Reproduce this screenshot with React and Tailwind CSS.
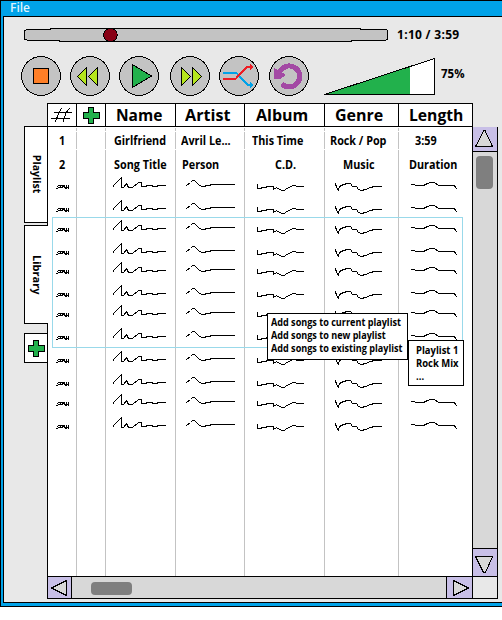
import React from "react";

const rowHeights = [
  "h-[23px]", "h-[20px]", "h-[23px]", "h-[19px]", "h-[23px]", "h-[20px]",
  "h-[23px]", "h-[23px]", "h-[23px]", "h-[20px]", "h-[23px]", "h-[162px]",
];

const columns = [
  { x: 48, w: 28, cls: "w-[29px] border-r", d: "M56 188.5H58M58 187.5H60M57 186.5H58M58 185.5H65M60.5 185V188M61 187.5H62M62.5 186V188M63 186.5H65M64 187.5H66M65 188.5H67M66.5 185V188M67 187.5H68M68.5 185V189" },
  { x: 77, w: 28, cls: "w-[29px] border-r", d: "" },
  { x: 106, w: 69, cls: "w-[70px] border-r", d: "M113.5 187V185.5L116.5 182.5L121.5 177.5V187.5H123.5L126.5 183.5L128.5 187.5H132.5L138.5 182.5H141.5V186.5H146.5L147 185.5H152L152.5 186.5H157L157.5 185.5H166" },
  { x: 176, w: 68, cls: "w-[69px] border-r", d: "M186.5 185.5L190.5 182.5L192.5 180.5H194.5L198.5 184.5L201.5 186.5H205.5L206 185.5H210L210.5 184.5H235" },
  { x: 245, w: 79, cls: "w-[80px] border-r", d: "M257.5 184V188.5H261.5L262 187.5H266L266.5 186.5H273.5V189.5L276.5 187.5L281.5 190.5H284.5L286.5 188.5L293.5 185.5L298.5 186.5H304" },
  { x: 325, w: 73, cls: "w-[74px] border-r", d: "M335.5 183.5L336.5 187.5L338.5 190.5L339.5 186.5L343.5 184.5L347.5 183.5H350.5L352.5 186.5H356.5L358.5 189.5L361.5 190.5L365.5 189.5L370.5 187.5L374.5 186.5H382" },
  { x: 399, w: 73, cls: "w-[73px]", d: "M411 184.5H414.5L415.5 185.5H423.5L427.5 183.5L430 182.5H434.5L438.5 185.5H454.5L455.5 187.5L457 188.5" },
];

const headings = [
  { text: "Name", cls: "w-[70px] pl-[10px]", scale: "scale-x-[0.97]" },
  { text: "Artist", cls: "w-[69px] pl-[9px]", scale: "scale-x-[1.01]" },
  { text: "Album", cls: "w-[80px] pl-[11px]", scale: "scale-x-100" },
  { text: "Genre", cls: "w-[74px] pl-[10px]", scale: "scale-x-100" },
  { text: "Length", cls: "w-[74px] pl-[10px]", scale: "scale-x-[0.98]" },
];

const songs = [
  {
    row: "h-[19px] py-px",
    cell: "",
    values: [
      ["1", "pl-[11px]"], ["", ""], ["Girlfriend", "pl-[8px]"], ["Avril Le...", "pl-[5px]"],
      ["This Time", "pl-[7px]"], ["Rock / Pop", "pl-[5px]"], ["3:59", "pl-[16px]"],
    ],
  },
  {
    row: "h-[24px]",
    cell: "pt-[6px]",
    values: [
      ["2", "pl-[11px]"], ["", ""], ["Song Title", "pl-[8px]"], ["Person", "pl-[6px]"],
      ["C.D.", "pl-[30px]"], ["Music", "pl-[18px]"], ["Duration", "pl-[10px]"],
    ],
  },
];

function Plus() {
  return (
    <svg width="17" height="17" viewBox="0 0 17 17" shapeRendering="crispEdges" className="shrink-0">
      <path d="M5.5 .5H10.5V5.5H16.5V11.5H10.5V16.5H5.5V11.5H.5V5.5H5.5Z" fill="#22b14c" stroke="#000" />
    </svg>
  );
}

function Round({ children, x, className }) {
  return (
    <svg width="40" height="40" viewBox={`${x - 20.5} 56 40 40`} shapeRendering="crispEdges" className={`shrink-0 ${className || ""}`}>
      <circle cx={x - 0.5} cy="76" r="19.4" fill="#c3c3c3" stroke="#000" />
      {children}
    </svg>
  );
}

function Controls() {
  return (
    <div className="flex pl-[17px] pt-[7px]">
      <Round x={41.5}>
        <rect x="33.5" y="68.5" width="15" height="15" fill="#ff7f27" stroke="#000" />
      </Round>
      <Round x={90.5} className="ml-[9px]">
        <path d="M77.5 76.5L86.5 67.5V85.5ZM88.5 76.5L97.5 67.5V85.5Z" fill="#b5e61d" stroke="#000" />
      </Round>
      <Round x={139.5} className="ml-[9px]">
        <path d="M132.5 64.5V87.5L151.5 76Z" fill="#22b14c" stroke="#000" />
      </Round>
      <Round x={190.5} className="ml-[11px]">
        <path d="M181.5 67.5V85.5L190.5 76.5ZM192.5 67.5V85.5L201.5 76.5Z" fill="#b5e61d" stroke="#000" />
      </Round>
      <Round x={239.5} className="ml-[9px]">
        <path d="M223 73H236.5L248 85H251" fill="none" stroke="#00a2e8" strokeWidth="2" />
        <path d="M250 82L253.5 85L250 88Z" fill="#00a2e8" />
        <path d="M223 79H235.5L247 67H250" fill="none" stroke="#ed1c24" strokeWidth="2" />
        <path d="M250 64L253.5 67L250 70Z" fill="#ed1c24" />
      </Round>
      <Round x={289.5} className="ml-[10px]">
        <path d="M282 84A10.5 10.5 0 1 0 280 71.5" fill="none" stroke="#a349a4" strokeWidth="5" />
        <path d="M274 68V79H280L284.5 76V74Z" fill="#a349a4" />
      </Round>
      <svg width="112" height="40" viewBox="324 56 112 40" shapeRendering="crispEdges" className="ml-[15px] shrink-0">
        <path d="M324.5 94.5L434.5 58.5V94.5Z" fill="#fff" />
        <path d="M324.5 94.5L410 66.5V94.5Z" fill="#22b14c" />
        <path d="M324.5 94.5L434.5 58.5V94.5Z" fill="none" stroke="#000" />
      </svg>
      <span className="ml-[5px] mt-[10px] origin-left text-[11.5px] leading-4">75%</span>
    </div>
  );
}

function Seek() {
  return (
    <div className="flex h-[32px] pl-[20px] pt-[10px]">
      <svg width="365" height="16" viewBox="24 27 365 16" shapeRendering="crispEdges" className="shrink-0">
        <path d="M24.5 30.5L28 29.5H50V28.5H360V29.5H386L387.5 30.5V39.5L384 40.5H351V41.5H59V40.5H30L24.5 39.5Z" fill="#c3c3c3" stroke="#000" />
        <circle cx="110.5" cy="35" r="6.8" fill="#880015" stroke="#000" />
      </svg>
      <span className="ml-[8px] origin-left whitespace-nowrap text-[12px] leading-4 tracking-[0.3px]">1:10 / 3:59</span>
    </div>
  );
}

function Sidebar() {
  return (
    <div className="flex w-[44px] shrink-0 flex-col pl-[20px]">
      <div className="h-[23px] border-r border-black" />
      <div className="flex h-[97px] items-center justify-center border border-black bg-white pl-[2px]">
        <span className="scale-y-[0.96] text-[11px] leading-4 [writing-mode:vertical-rl]">Playlist</span>
      </div>
      <div className="h-[2px] border-r border-black" />
      <div className="flex h-[99px] items-center justify-center border border-r-0 border-black bg-white pl-px">
        <span className="text-[11px] leading-4 [writing-mode:vertical-rl]">Library</span>
      </div>
      <div className="h-[9px] border-r border-black" />
      <div className="flex h-[30px] items-center justify-center border border-black bg-white pl-px">
        <Plus />
      </div>
      <div className="grow border-r border-black" />
    </div>
  );
}

function Table() {
  return (
    <div className="flex h-[449px] w-[424px] shrink-0 flex-col overflow-hidden bg-white">
      <div className="flex h-[4px] pt-px">
        {columns.map((c) => (
          <div key={c.x} className={`shrink-0 border-[#c3c3c3] ${c.cls}`} />
        ))}
      </div>
      {songs.map((s, i) => (
        <div key={i} className={`flex ${s.row}`}>
          {columns.map((c, j) => (
            <div key={c.x} className={`shrink-0 border-[#c3c3c3] ${c.cls} ${s.cell} ${s.values[j][1]}`}>
              <span className="inline-block origin-left scale-x-[0.9] whitespace-nowrap align-top text-[12px] leading-[17px]">
                {s.values[j][0]}
              </span>
            </div>
          ))}
        </div>
      ))}
      {rowHeights.map((h, i) => (
        <div key={i} className={`flex shrink-0 ${h}`}>
          {columns.map((c) => (
            <div key={c.x} className={`shrink-0 border-[#c3c3c3] ${c.cls}`}>
              {c.d && (
                <svg width={c.w} height="19" viewBox={`${c.x} 174 ${c.w} 19`} shapeRendering="crispEdges" className="block overflow-visible">
                  <path d={c.d} fill="none" stroke="#000" />
                </svg>
              )}
            </div>
          ))}
        </div>
      ))}
    </div>
  );
}

function VerticalBar() {
  return (
    <div className="flex w-[26px] shrink-0 flex-col border-x border-black bg-[#d8d8d8]">
      <div className="h-[25px] border-b border-black bg-[#c8bfe7]">
        <svg width="24" height="24" viewBox="473 127 24 24" shapeRendering="crispEdges">
          <path d="M484 130.5H485L492.5 146.5H475.5Z" fill="#d8d8d8" stroke="#000" />
        </svg>
      </div>
      <div className="ml-[3px] mt-[4px] h-[33px] w-[17px] rounded bg-[#7f7f7f]" />
      <div className="mt-auto h-[28px] border-t border-black bg-[#c8bfe7]">
        <svg width="24" height="27" viewBox="473 549 24 27" shapeRendering="crispEdges">
          <path d="M475.5 556.5H492.5L485.5 572.5H483.5Z" fill="#d8d8d8" stroke="#000" />
        </svg>
      </div>
    </div>
  );
}

function HorizontalBar() {
  return (
    <div className="flex h-[23px] w-[450px] border-y border-r border-black bg-[#d8d8d8]">
      <div className="w-[24px] border-r border-black bg-[#c8bfe7]">
        <svg width="23" height="21" viewBox="48 577 23 21" shapeRendering="crispEdges">
          <path d="M51.5 588L66.5 580.5V595.5Z" fill="#d8d8d8" stroke="#000" />
        </svg>
      </div>
      <div className="ml-[19px] mt-[5px] h-[13px] w-[41px] rounded bg-[#7f7f7f]" />
      <div className="ml-auto w-[27px] border-x border-black bg-[#c8bfe7]">
        <svg width="25" height="21" viewBox="447 577 25 21" shapeRendering="crispEdges">
          <path d="M453.5 580.5V595.5L468.5 588Z" fill="#d8d8d8" stroke="#000" />
        </svg>
      </div>
      <div className="w-[24px] bg-[#e8e8e8]" />
    </div>
  );
}

export default function App() {
  return (
    <div className="relative h-[620px] w-[502px] overflow-hidden bg-white font-['Open_Sans',sans-serif] font-bold text-black">
      <div className="h-[607px] border-y border-l border-black bg-[#00a2e8] pb-[3px] pl-[2px]">
        <div className="h-[15px] pl-[7px] text-[12px] font-semibold leading-[14px] text-[#dff3fd]">File</div>
        <div className="h-[587px] border-y border-l border-black bg-[#e8e8e8]">
          <div className="h-[86px]">
            <Seek />
            <Controls />
          </div>
          <div className="flex h-[496px]">
            <Sidebar />
            <div className="w-[450px] shrink-0">
              <div className="flex h-[24px] w-[425px] border-y border-black bg-white">
                <div className="flex w-[29px] shrink-0 items-center border-r border-black">
                  <svg width="28" height="22" viewBox="48 104 28 22" shapeRendering="crispEdges">
                    <path d="M54 112.5H71.5M51 118.5H70M61.5 108L59 113L55 122M69.5 108L66 113L63 122" fill="none" stroke="#000" />
                  </svg>
                </div>
                <div className="flex w-[29px] shrink-0 items-center justify-center border-r border-black"><Plus /></div>
                {headings.map((h) => (
                  <div key={h.text} className={`shrink-0 border-r border-black text-[16px] leading-[22px] ${h.cls}`}>
                    <span className={`inline-block origin-left align-top ${h.scale}`}>{h.text}</span>
                  </div>
                ))}
              </div>
              <div className="flex h-[449px]">
                <Table />
                <VerticalBar />
              </div>
              <HorizontalBar />
            </div>
          </div>
        </div>
      </div>
      <div className="absolute left-[52px] top-[217px] h-[131px] w-[411px] border border-[#99d9ea]" />
      <div className="absolute left-[267px] top-[313px] h-[47px] w-[141px] border border-black bg-white pl-[3px] pt-[2px] text-[10.5px] leading-[13px]">
        {["Add songs to current playlist", "Add songs to new playlist", "Add songs to existing playlist"].map((t) => (
          <div key={t} className="origin-left scale-x-[0.865] whitespace-nowrap">{t}</div>
        ))}
      </div>
      <div className="absolute left-[408px] top-[340px] h-[46px] w-[56px] border border-black bg-white pl-[7px] pt-[3px] text-[10.5px] leading-[13px]">
        {["Playlist 1", "Rock Mix", "..."].map((t) => (
          <div key={t} className="origin-left scale-x-[0.9] whitespace-nowrap">{t}</div>
        ))}
      </div>
    </div>
  );
}
